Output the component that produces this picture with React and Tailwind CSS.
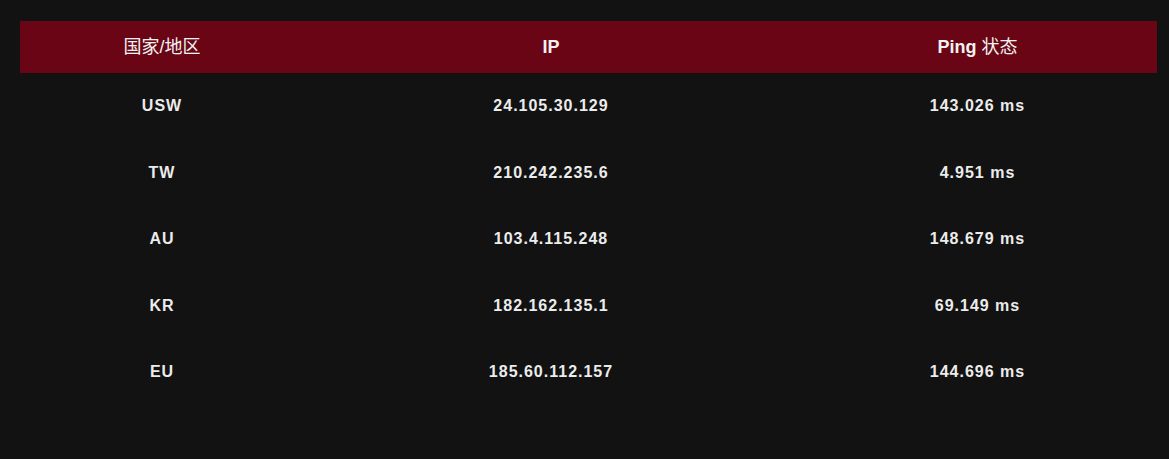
import React from "react";

const rows = [
  ["USW", "24.105.30.129", "143.026 ms"],
  ["TW", "210.242.235.6", "4.951 ms"],
  ["AU", "103.4.115.248", "148.679 ms"],
  ["KR", "182.162.135.1", "69.149 ms"],
  ["EU", "185.60.112.157", "144.696 ms"],
];

export default function App() {
  return (
    <div
      className="w-[1169px] h-[459px] bg-[#121212] pt-[21px] pl-[20px]"
      style={{ fontFamily: '"Liberation Sans", Arial, "Noto Sans CJK SC", sans-serif' }}
    >
      <div className="w-[1137px]">
        <div className="grid grid-cols-[284px_494px_1fr] h-[52px] bg-[#690515] text-[#f2f2f2] text-[18px] items-center">
          <div className="text-center font-normal">国家/地区</div>
          <div className="text-center font-bold">IP</div>
          <div className="text-center"><span className="font-bold">Ping</span> 状态</div>
        </div>
        {rows.map((r) => (
          <div
            key={r[0]}
            className="grid grid-cols-[284px_494px_1fr] h-[66.5px] items-center text-[16px] font-bold text-[#ececec] tracking-[1px]"
          >
            <div className="text-center">{r[0]}</div>
            <div className="text-center">{r[1]}</div>
            <div className="text-center">{r[2]}</div>
          </div>
        ))}
      </div>
    </div>
  );
}
